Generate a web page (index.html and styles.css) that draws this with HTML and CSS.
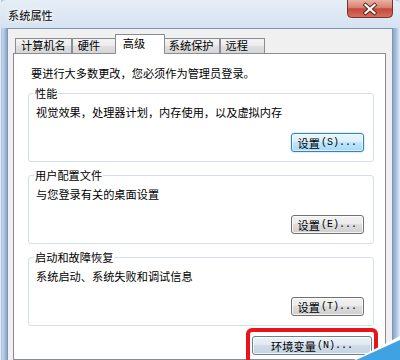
FILE: index.html
```html
<!DOCTYPE html>
<html lang="zh-CN">
<head>
    <meta charset="UTF-8">
    <meta name="viewport" content="width=device-width, initial-scale=1.0">
    <title>系统属性</title>
    <link rel="stylesheet" href="styles.css">
</head>
<body>
    <div class="window">
        <div class="titlebar">
            <span class="title">系统属性</span>
            <svg class="close" width="46" height="18" viewBox="0 0 46 18">
                <defs>
                    <linearGradient id="red" x1="0" y1="0" x2="0" y2="1">
                        <stop offset="0" stop-color="#eab1a4"/>
                        <stop offset="0.45" stop-color="#d6806f"/>
                        <stop offset="0.5" stop-color="#c4493b"/>
                        <stop offset="1" stop-color="#d8705f"/>
                    </linearGradient>
                </defs>
                <path d="M0.5 0 V13.5 Q0.5 17.5 4.5 17.5 H41.5 Q45.5 17.5 45.5 13.5 V0" fill="url(#red)" stroke="#7a3127"/>
                <path d="M18.5 5 L27.5 13 M27.5 5 L18.5 13" stroke="#5a241d" stroke-width="4" stroke-linecap="square"/>
                <path d="M18.5 5 L27.5 13 M27.5 5 L18.5 13" stroke="#fff" stroke-width="2.2" stroke-linecap="square"/>
            </svg>
        </div>

        <div class="face">
            <div class="tabs">
                <div class="tab">计算机名</div>
                <div class="tab">硬件</div>
                <div class="tab active">高级</div>
                <div class="tab">系统保护</div>
                <div class="tab">远程</div>
            </div>

            <div class="panel">
                <p class="note">要进行大多数更改，您必须作为管理员登录。</p>

                <fieldset class="group">
                    <legend>性能</legend>
                    <p class="desc">视觉效果，处理器计划，内存使用，以及虚拟内存</p>
                    <div class="row">
                        <button class="btn default">设置<span class="key">(S)...</span></button>
                    </div>
                </fieldset>

                <fieldset class="group">
                    <legend>用户配置文件</legend>
                    <p class="desc">与您登录有关的桌面设置</p>
                    <div class="row">
                        <button class="btn">设置<span class="key">(E)...</span></button>
                    </div>
                </fieldset>

                <fieldset class="group">
                    <legend>启动和故障恢复</legend>
                    <p class="desc">系统启动、系统失败和调试信息</p>
                    <div class="row">
                        <button class="btn">设置<span class="key">(T)...</span></button>
                    </div>
                </fieldset>

                <div class="row env-row">
                    <button class="btn env">环境变量<span class="key">(N)...</span></button>
                </div>
            </div>
        </div>

        <div class="highlight"></div>
        <svg class="corner" width="46" height="26" viewBox="0 0 46 26">
            <polygon points="0,26 46,2 46,6 8,26" fill="#ffffff"/>
            <polygon points="2,26 46,6 46,26" fill="#3fa3e3"/>
        </svg>
    </div>
</body>
</html>
```

FILE: styles.css
```css
* {
    box-sizing: border-box;
}
body {
    margin: 0;
    width: 400px;
    height: 360px;
    overflow: hidden;
    font-family: "Noto Sans CJK SC", "Liberation Sans", sans-serif;
    font-size: 11.2px;
    line-height: 12px;
    color: #000;
    background: #c9d9ec;
}
.window {
    position: relative;
    height: 360px;
    display: flex;
    flex-direction: column;
    overflow: hidden;
    background: linear-gradient(90deg, #e4ecf6 0, #e4ecf6 1px, #a9c1df 1px, #c3d5ea 3px, #a1badb 5px, #8aa6cc 7px, #c9d9ec 7px, #c9d9ec 393px, #8aa6cc 393px, #a6bedd 396px, #c4d6eb 398px, #e4ecf6 400px);
}
.titlebar {
    height: 28px;
    display: flex;
    align-items: flex-start;
    padding-left: 8px;
    background: linear-gradient(#e6eef7, #d5e2ef);
    border-radius: 6px 6px 0 0;
}
.title {
    margin-top: 9px;
    text-shadow: 0 0 6px #fff, 0 0 3px #fff;
}
.close {
    display: block;
    margin-left: auto;
    margin-right: 7px;
}
.face {
    flex: 1;
    display: flex;
    flex-direction: column;
    margin: 0 7px;
    padding: 5px 6px 0 5px;
    background: #f0f0f0;
    border: 1px solid #7f95b1;
    border-bottom: none;
}
.tabs {
    display: flex;
    align-items: flex-end;
    margin-left: 2px;
    position: relative;
    z-index: 1;
}
.tab {
    height: 15px;
    min-width: 45px;
    padding: 0 5px;
    line-height: 13px;
    border: 1px solid #898c95;
    border-bottom: none;
    background: linear-gradient(#f4f4f4, #ececec 45%, #e0e0e0 50%, #d6d6d6);
    white-space: nowrap;
}
.tab.active {
    position: relative;
    z-index: 2;
    height: 20px;
    min-width: 50px;
    margin: 0 -2px -1px;
    padding: 1px 7px 0;
    line-height: 15px;
    background: #fff;
}
.panel {
    flex: 1;
    background: #fff;
    border: 1px solid #898c95;
    padding: 13px 11px 0 14px;
}
.note {
    margin: 0 0 0 3px;
}
.group {
    margin: 8px 0 0;
    padding: 0 9px 9px 7px;
    min-inline-size: 0;
    border: 1px solid #d5dfe5;
    border-radius: 3px;
}
.group + .group {
    margin-top: 7px;
}
.group legend {
    padding: 0 1px;
    margin-left: -2px;
    line-height: 12px;
}
.desc {
    margin: 7px 0 0;
}
.row {
    display: flex;
    justify-content: flex-end;
    margin-top: 15px;
}
.btn {
    display: flex;
    align-items: center;
    justify-content: center;
    height: 19px;
    min-width: 69px;
    padding: 0 6px;
    font-family: inherit;
    font-size: 11.2px;
    line-height: 12px;
    color: #000;
    border: 1px solid #707070;
    border-radius: 3px;
    background: linear-gradient(#f2f2f2, #ebebeb 45%, #dddddd 50%, #cfcfcf);
    box-shadow: inset 0 0 0 1px rgba(255, 255, 255, 0.75);
}
.btn.default {
    border-color: #3c7fb1;
    background: linear-gradient(#eaf6fd, #d9f0fc 45%, #bee6fd 50%, #a7d9f5);
    box-shadow: inset 0 0 0 1px rgba(255, 255, 255, 0.6), 0 0 2px #7ec4ef;
}
.key {
    font-family: "Liberation Mono", monospace;
    font-size: 10px;
    margin-left: 1px;
}
.env-row {
    margin-top: 10px;
    margin-right: 2px;
}
.btn.env {
    width: 120px;
    border-color: #6c7f94;
    background: linear-gradient(#eef3f8, #e0e8f1 45%, #d0dce8 50%, #c4d3e3);
}
.highlight {
    position: absolute;
    left: 246px;
    top: 328px;
    width: 132px;
    height: 42px;
    border: 4px solid #e8141b;
    border-radius: 6px;
}
.corner {
    position: absolute;
    right: 0;
    bottom: 0;
    display: block;
}
```
